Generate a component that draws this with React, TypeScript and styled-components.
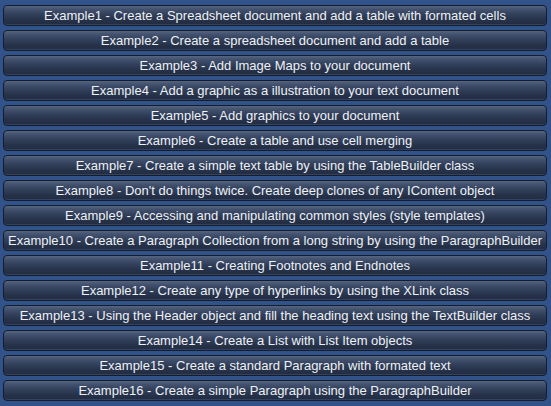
import React from "react";
import styled, { createGlobalStyle } from "styled-components";

const Global = createGlobalStyle`
  html, body { margin: 0; padding: 0; }
  body {
    background: #32538a;
    width: 551px;
    height: 406px;
    overflow: hidden;
  }
`;

const Page = styled.div`
  width: 551px;
  height: 406px;
  box-sizing: border-box;
  padding: 5px 4px 0 3px;
  display: flex;
  flex-direction: column;
  gap: 4px;
  background: #32538a;
`;

const Button = styled.button`
  height: 21px;
  width: 100%;
  box-sizing: border-box;
  margin: 0;
  padding: 0 2px 1px;
  border: 1px solid #141d2e;
  border-radius: 4px;
  background: linear-gradient(
    to bottom,
    #56667f 0px,
    #445370 3px,
    #33415c 8px,
    #263249 14px,
    #222c42 100%
  );
  box-shadow: inset 0 -1px 0 rgba(70, 90, 120, 0.5);
  color: #eef1f6;
  font-family: "Liberation Sans", Arial, sans-serif;
  font-size: 13px;
  line-height: 19px;
  text-align: center;
  white-space: nowrap;
  overflow: hidden;
  cursor: pointer;
`;

const items = [
  "Example1 - Create a Spreadsheet document and add a table with formated cells",
  "Example2 - Create a spreadsheet document and add a table",
  "Example3 - Add Image Maps to your document",
  "Example4 - Add a graphic as a illustration to your text document",
  "Example5 - Add graphics to your document",
  "Example6 - Create a table and use cell merging",
  "Example7 - Create a simple text table by using the TableBuilder class",
  "Example8 - Don't do things twice. Create deep clones of any IContent object",
  "Example9 - Accessing and manipulating common styles (style templates)",
  "Example10 - Create a Paragraph Collection from a long string by using the ParagraphBuilder",
  "Example11 - Creating Footnotes and Endnotes",
  "Example12 - Create any type of hyperlinks by using the XLink class",
  "Example13 - Using the Header object and fill the heading text using the TextBuilder class",
  "Example14 - Create a List with List Item objects",
  "Example15 - Create a standard Paragraph with formated text",
  "Example16 - Create a simple Paragraph using the ParagraphBuilder",
];

export default function App() {
  return (
    <>
      <Global />
      <Page>
        {items.map((t) => (
          <Button key={t}>{t}</Button>
        ))}
      </Page>
    </>
  );
}
